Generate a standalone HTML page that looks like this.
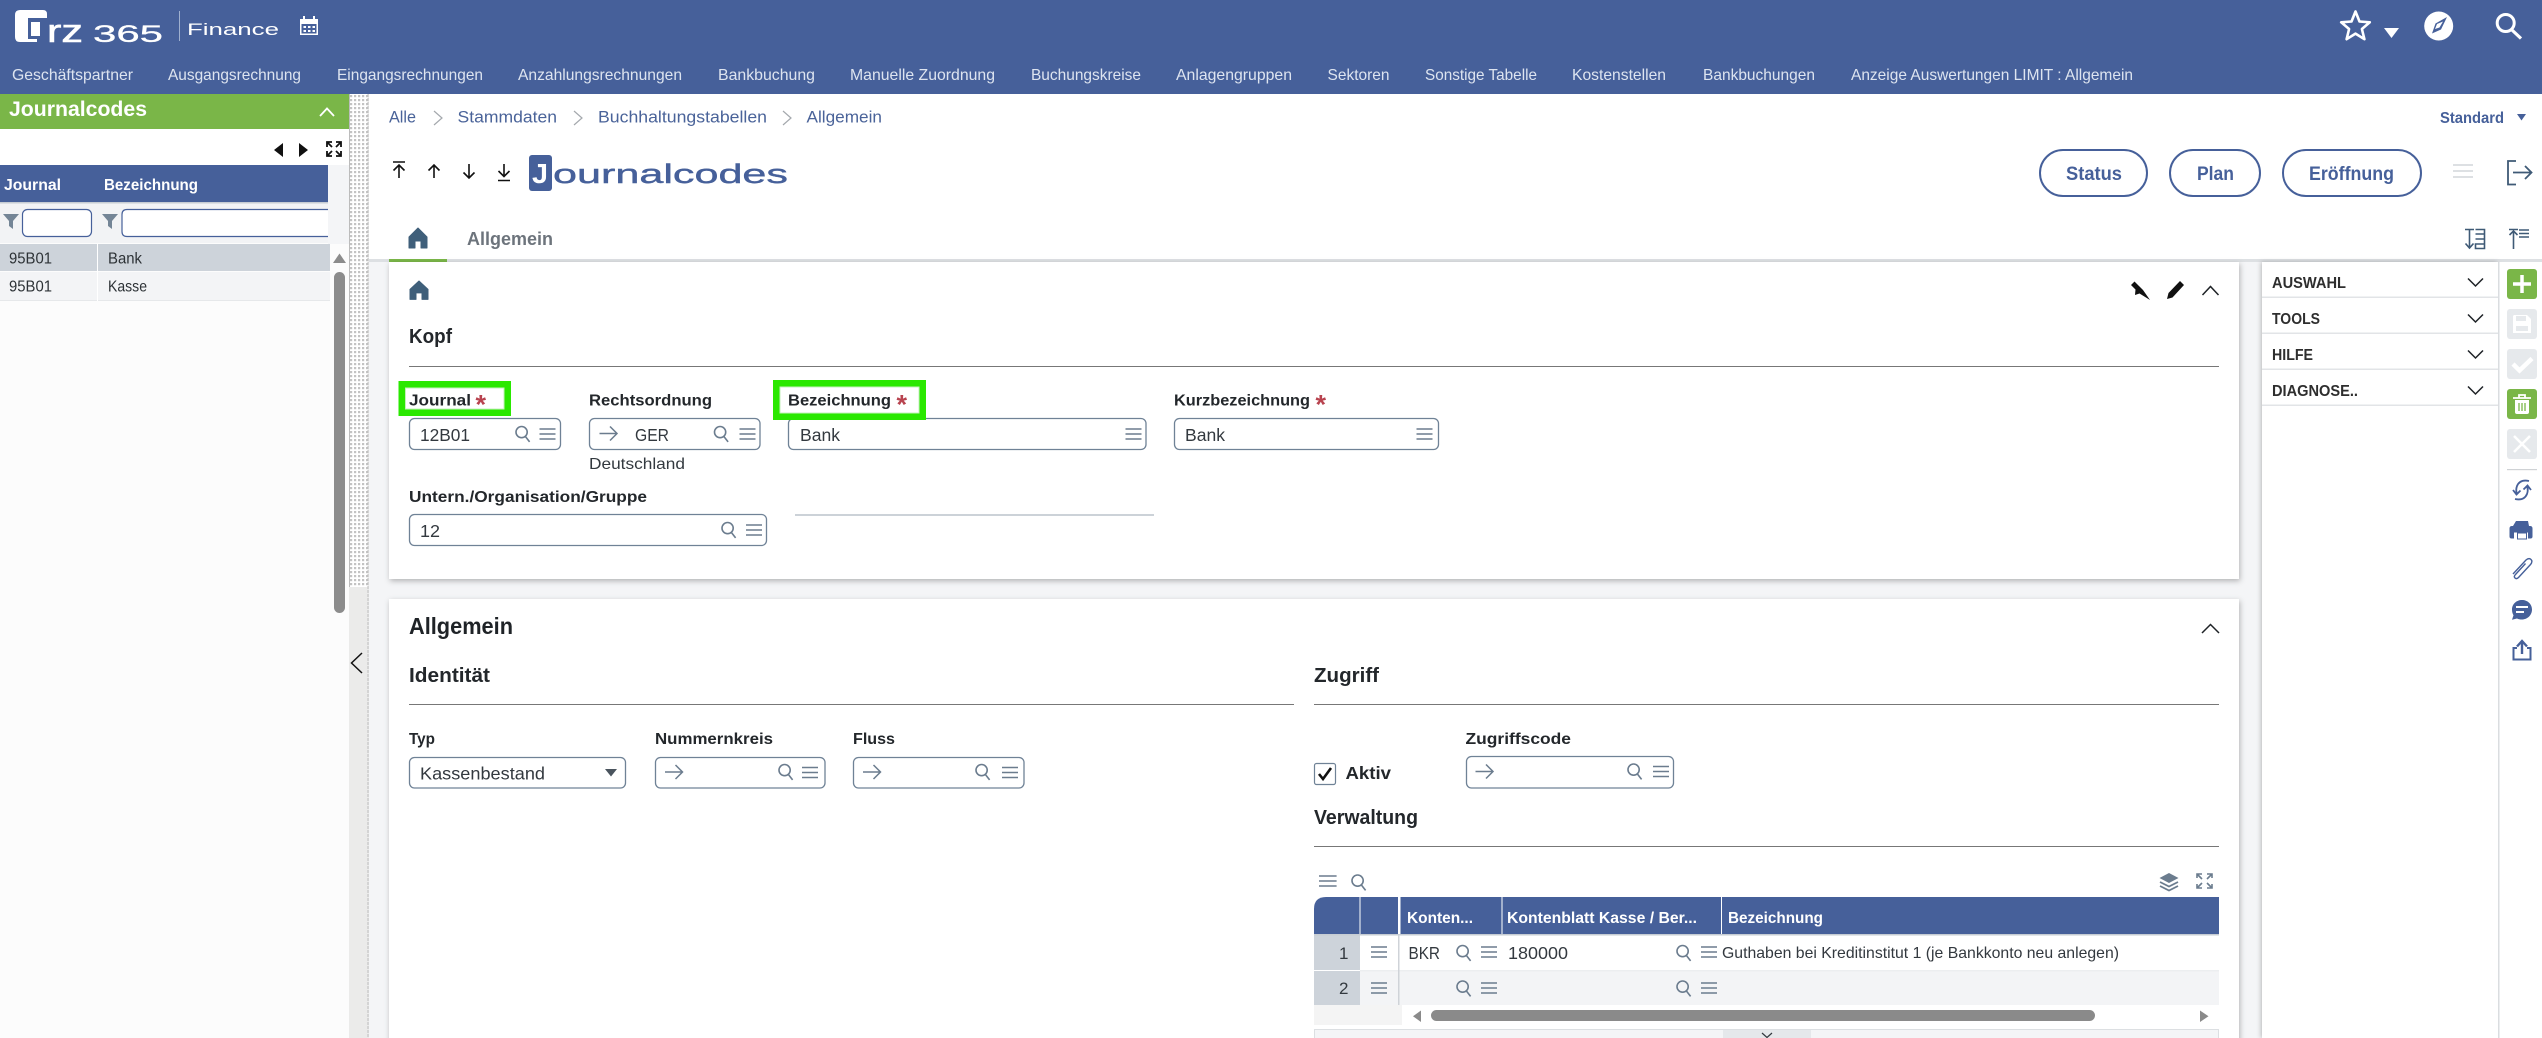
<!DOCTYPE html>
<html lang="de">
<head>
<meta charset="utf-8">
<title>Journalcodes</title>
<style>
html,body{margin:0;padding:0;background:#fff;width:2542px;height:1038px;overflow:hidden}
svg{display:block;font-family:"Liberation Sans",Arial,sans-serif}
text{white-space:pre}
.b{font-weight:700}
.nav{font-size:16px;fill:#dde4f0}
.crumb{font-size:16.500px;fill:#4a6399}
.lbl{font-size:16px;font-weight:700;fill:#23272b}
.val{font-size:17.500px;fill:#33393f}
.cell{font-size:16px;fill:#2d3236}
.sec{font-size:20px;font-weight:700;fill:#23272b}
.acc{font-size:15.500px;font-weight:700;fill:#2e2e2e}
.btn{font-size:19px;font-weight:700;fill:#46609a}
.th{font-size:16px;font-weight:700;fill:#fff}
.ln{stroke:#777;stroke-width:1}
.inp{fill:#fff;stroke:#6f8296;stroke-width:1.3}
.ico{fill:none;stroke:#6b7c8e;stroke-width:1.6}
</style>
</head>
<body>
<svg width="2542" height="1038" viewBox="0 0 2542 1038" xmlns="http://www.w3.org/2000/svg">
<defs>
<pattern id="dots" x="349" y="94" width="4" height="4" patternUnits="userSpaceOnUse"><rect width="4" height="4" fill="#fff"/><rect x="1" y="1" width="2.2" height="2.2" fill="#c3c3c3"/></pattern>
<filter id="sh" x="-2%" y="-5%" width="104%" height="110%"><feDropShadow dx="1" dy="2" stdDeviation="3" flood-color="#000" flood-opacity=".28"/></filter>
<filter id="sh2" x="-5%" y="-2%" width="110%" height="104%"><feDropShadow dx="-1" dy="0" stdDeviation="2.5" flood-color="#000" flood-opacity=".25"/></filter>
<g id="s"><circle cx="6.6" cy="6.6" r="5.6" class="ico"/><path d="M10.4 11l4.2 5.4" class="ico" stroke-width="2"/></g>
<g id="h"><path d="M0 1h16M0 6h16M0 11h16" class="ico" stroke-width="1.8"/></g>
<g id="a"><path d="M0 7.5h17M10.5 0.5l7 7-7 7" fill="none" stroke="#6b7c8e" stroke-width="1.5"/></g>
<path id="home" d="M9 0L18 9V20H12V13H6V20H0V9Z" fill="#3f5f7a" stroke="#3f5f7a" stroke-linejoin="round"/>
<path id="chd" d="M0 0L7.5 7.5L15 0" fill="none" stroke="#1e2226" stroke-width="1.5"/>
</defs>

<!-- Header -->
<rect width="2542" height="94" fill="#46609a"/>
<path d="M20 10H43Q47 10 47 14V18H28V39H37V42H20Q15 42 15 37V15Q15 10 20 10ZM31 22H40V36H31Z" fill="#fff"/>
<text x="47" y="42" font-size="32" fill="#fff" textLength="36" lengthAdjust="spacingAndGlyphs" stroke="#fff" stroke-width=".6">rz</text>
<text x="93" y="42" font-size="24" fill="#fff" textLength="70" lengthAdjust="spacingAndGlyphs" stroke="#fff" stroke-width=".3">365</text>
<rect x="179" y="11" width="1" height="30" fill="#9fb0cf"/>
<text x="187" y="35" font-size="17" fill="#fff" textLength="92" lengthAdjust="spacingAndGlyphs">Finance</text>
<g fill="#fff"><path d="M300 19h18v16h-18zM301.500 24v9.500h15v-9.500z" fill-rule="evenodd"/><rect x="303" y="16" width="2" height="4"/><rect x="313" y="16" width="2" height="4"/><rect x="303.500" y="26" width="2.500" height="2"/><rect x="308" y="26" width="2.500" height="2"/><rect x="312.500" y="26" width="2.500" height="2"/><rect x="303.500" y="30" width="2.500" height="2"/><rect x="308" y="30" width="2.500" height="2"/><rect x="312.500" y="30" width="2.500" height="2"/></g>
<path d="M2355.500 11.500l4 10 10.300.8-7.900 6.700 2.500 10.200-8.900-5.600-8.900 5.600 2.500-10.200-7.900-6.700 10.300-.8z" fill="none" stroke="#fff" stroke-width="2.600" stroke-linejoin="round"/>
<path d="M2384 28h15l-7.500 10z" fill="#fff"/>
<circle cx="2438.700" cy="26" r="14.500" fill="#fff"/>
<path d="M2447 17l-6 12.500-9 4 3.500-10z" fill="#46609a"/><path d="M2443 21.500l-3.500 6-4.500 1.500 2-5z" fill="#fff"/>
<circle cx="2505.700" cy="23" r="8.500" fill="none" stroke="#fff" stroke-width="3"/><path d="M2512 30l9 8.500" stroke="#fff" stroke-width="3.200" fill="none"/>

<text class="nav" x="12" y="80" textLength="121" lengthAdjust="spacingAndGlyphs">Geschäftspartner</text>
<text class="nav" x="168" y="80" textLength="133" lengthAdjust="spacingAndGlyphs">Ausgangsrechnung</text>
<text class="nav" x="337" y="80" textLength="146" lengthAdjust="spacingAndGlyphs">Eingangsrechnungen</text>
<text class="nav" x="518" y="80" textLength="164" lengthAdjust="spacingAndGlyphs">Anzahlungsrechnungen</text>
<text class="nav" x="718" y="80" textLength="97" lengthAdjust="spacingAndGlyphs">Bankbuchung</text>
<text class="nav" x="850" y="80" textLength="145" lengthAdjust="spacingAndGlyphs">Manuelle Zuordnung</text>
<text class="nav" x="1031" y="80" textLength="110" lengthAdjust="spacingAndGlyphs">Buchungskreise</text>
<text class="nav" x="1176" y="80" textLength="116" lengthAdjust="spacingAndGlyphs">Anlagengruppen</text>
<text class="nav" x="1327.500" y="80" textLength="62" lengthAdjust="spacingAndGlyphs">Sektoren</text>
<text class="nav" x="1425" y="80" textLength="112" lengthAdjust="spacingAndGlyphs">Sonstige Tabelle</text>
<text class="nav" x="1572" y="80" textLength="94" lengthAdjust="spacingAndGlyphs">Kostenstellen</text>
<text class="nav" x="1703" y="80" textLength="112" lengthAdjust="spacingAndGlyphs">Bankbuchungen</text>
<text class="nav" x="1851" y="80" textLength="282" lengthAdjust="spacingAndGlyphs">Anzeige Auswertungen LIMIT : Allgemein</text>

<!-- Left panel -->
<rect x="0" y="94" width="349" height="944" fill="#fcfcfc"/>
<rect x="0" y="94" width="349" height="35" fill="#7ab648"/>
<rect x="0" y="129" width="349" height="36" fill="#fff"/>
<text x="9" y="116" font-size="21" class="b" fill="#fff" textLength="138" lengthAdjust="spacingAndGlyphs">Journalcodes</text>
<path d="M320 116l7-7.500 7 7.500" fill="none" stroke="#fff" stroke-width="1.800"/>
<path d="M283 143v14l-9-7zM299 143v14l9-7z" fill="#111"/>
<path d="M327 147v-5h5M327 142l5 5M341 147v-5h-5M341 142l-5 5M327 151v5h5M327 156l5-5M341 151v5h-5M341 156l-5-5" fill="none" stroke="#111" stroke-width="1.800"/>
<rect x="328" y="165" width="21" height="79" fill="#f4f5f7"/>
<rect x="0" y="165" width="328" height="37" fill="#46609a"/>
<text class="th" x="4" y="190" textLength="57" lengthAdjust="spacingAndGlyphs">Journal</text>
<text class="th" x="104" y="190" textLength="94" lengthAdjust="spacingAndGlyphs">Bezeichnung</text>
<rect x="0" y="202" width="328" height="41" fill="#f2f3f5"/>
<rect x="0" y="202" width="328" height="1.500" fill="#c6ccd3"/>
<path d="M3 214h16l-6 7v8l-4-3v-5z" fill="#748596"/><path d="M102 214h16l-6 7v8l-4-3v-5z" fill="#748596"/>
<rect x="22.500" y="209.500" width="69" height="27" rx="5" fill="#fff" stroke="#46609a" stroke-width="1.200"/>
<path d="M328 209.500H127q-5 0-5 5v17q0 5 5 5H328" fill="#fff" stroke="#46609a" stroke-width="1.200"/>
<rect x="0" y="244" width="330" height="27" fill="#cdd3da"/>
<rect x="0" y="272" width="330" height="28" fill="#f3f4f6"/>
<rect x="0" y="300" width="330" height="1" fill="#e6e8ea"/>
<rect x="97" y="244" width="1" height="57" fill="#fff"/>
<text class="cell" x="9" y="263.500" textLength="43" lengthAdjust="spacingAndGlyphs">95B01</text>
<text class="cell" x="108" y="263.500" textLength="34" lengthAdjust="spacingAndGlyphs">Bank</text>
<text class="cell" x="9" y="291.500" textLength="43" lengthAdjust="spacingAndGlyphs">95B01</text>
<text class="cell" x="108" y="291.500" textLength="39" lengthAdjust="spacingAndGlyphs">Kasse</text>
<path d="M333 263l6.500-9.500 6.500 9.500z" fill="#8c8c8c"/>
<rect x="334" y="272" width="11" height="341" rx="5.500" fill="#8c8c8c"/>

<!-- Splitter -->
<rect x="349" y="94" width="20" height="944" fill="#ebebea"/>
<rect x="349" y="94" width="19" height="493" fill="url(#dots)"/>
<rect x="349" y="94" width="1" height="493" fill="#bcbcbc"/>
<path d="M368 94V1038" stroke="#bdbdbd" stroke-width="1" stroke-dasharray="3 1"/>
<path d="M362 653l-10.500 10 10.500 10" fill="none" stroke="#111" stroke-width="1.500"/>

<!-- Main top -->
<rect x="369" y="94" width="2173" height="168" fill="#fff"/>
<rect x="369" y="262" width="1893" height="776" fill="#f4f5f7"/>
<text class="crumb" x="389" y="122.500" textLength="27" lengthAdjust="spacingAndGlyphs">Alle</text>
<path d="M434 111l8 7-8 7M574 111l8 7-8 7M783 111l8 7-8 7" fill="none" stroke="#a4a8ad" stroke-width="1.200"/>
<text class="crumb" x="457.500" y="122.500" textLength="99.500" lengthAdjust="spacingAndGlyphs">Stammdaten</text>
<text class="crumb" x="598" y="122.500" textLength="169" lengthAdjust="spacingAndGlyphs">Buchhaltungstabellen</text>
<text class="crumb" x="806.500" y="122.500" textLength="75.500" lengthAdjust="spacingAndGlyphs">Allgemein</text>
<text x="2440" y="123" font-size="15.500" class="b" fill="#46609a" textLength="64" lengthAdjust="spacingAndGlyphs">Standard</text>
<path d="M2517 114h9l-4.500 6.500z" fill="#46609a"/>

<g fill="none" stroke="#111" stroke-width="1.600">
<path d="M393 162h12M399 178v-13M393.500 170.500l5.500-5.500 5.500 5.500"/>
<path d="M434 178v-13M428.500 170.500l5.500-5.500 5.500 5.500"/>
<path d="M469 164v13.500M463.500 172.500l5.500 5.500 5.500-5.500"/>
<path d="M504 164v12.500M498.500 171l5.500 5.500 5.500-5.500M498 180.500h12"/>
</g>
<rect x="529" y="155" width="23" height="36" rx="3" fill="#46609a"/>
<text x="532" y="183" font-size="28" class="b" fill="#fff" textLength="16" lengthAdjust="spacingAndGlyphs">J</text>
<text x="553" y="183" font-size="27" fill="#46609a" stroke="#46609a" stroke-width=".4" textLength="235" lengthAdjust="spacingAndGlyphs">ournalcodes</text>

<g fill="#fff" stroke="#46609a" stroke-width="2"><rect x="2040" y="150" width="107" height="46" rx="23"/><rect x="2170" y="150" width="90" height="46" rx="23"/><rect x="2283" y="150" width="138" height="46" rx="23"/></g>
<text class="btn" x="2066" y="180" textLength="56" lengthAdjust="spacingAndGlyphs">Status</text>
<text class="btn" x="2197" y="180" textLength="37" lengthAdjust="spacingAndGlyphs">Plan</text>
<text class="btn" x="2309" y="180" textLength="85" lengthAdjust="spacingAndGlyphs">Eröffnung</text>
<path d="M2453 165h20M2453 171h20M2453 177h20" stroke="#dde0e3" stroke-width="2"/>
<path d="M2516 161h-8v23.500h8M2513 172.500h18M2525 166l6.500 6.500-6.500 6.500" fill="none" stroke="#3f5a76" stroke-width="1.800"/>

<use href="#home" x="409" y="228"/>
<text x="467" y="245" font-size="18" class="b" fill="#6d747c" textLength="86" lengthAdjust="spacingAndGlyphs">Allgemein</text>
<rect x="369" y="259" width="2173" height="3" fill="#dde0e3"/>
<rect x="389" y="259" width="58" height="3" fill="#7ab648"/>
<g fill="none" stroke="#3f5a76" stroke-width="1.600">
<path d="M2465 229.500h9M2469.500 229.500v19M2465.500 243.500l4 4.500 4-4.500"/>
<path d="M2475.500 229.500h9v4.500h-9M2475.500 234h9v5h-9M2475.500 239h9v5h-9M2475.500 244h9v4.500h-9z" />
<path d="M2509 229.500h9M2513.500 231v18M2509.500 235l4-4 4 4M2519 230h10M2519 233.500h10M2519 237h10" />
</g>

<!-- Card 1 -->
<rect x="389" y="262" width="1850" height="317" fill="#fff" filter="url(#sh)"/>
<use href="#home" transform="translate(410 281) scale(1 .92)"/>
<path d="M2134.500 281.500L2139 286 2143 290 2150 300 2139.500 293.500 2135 295 2135.500 289.500 2131 285Z" fill="#111"/>
<path d="M2180 281l4 4-11.500 12.500-5.500 1.500 1.500-6z" fill="#111"/>
<path d="M2202.500 295l8-8.500 8 8.500" fill="none" stroke="#1e2226" stroke-width="1.500"/>
<text class="sec" x="409" y="343" textLength="43" lengthAdjust="spacingAndGlyphs">Kopf</text>
<path class="ln" d="M409 366.500H2219"/>

<rect class="inp" x="409.500" y="418.500" width="151" height="31" rx="5"/>
<rect class="inp" x="589.500" y="418.500" width="170.500" height="31" rx="5"/>
<rect class="inp" x="788.500" y="418.500" width="357.500" height="31" rx="5"/>
<rect class="inp" x="1174.500" y="418.500" width="264" height="31" rx="5"/>

<rect x="402" y="384.500" width="105.500" height="28" fill="#fff" stroke="#2ae800" stroke-width="7"/>
<rect x="405.500" y="388" width="98.500" height="21" fill="none" stroke="#c6efbc" stroke-width="1"/>
<rect x="776.500" y="383.500" width="146" height="33" fill="#fff" stroke="#2ae800" stroke-width="7"/>
<rect x="780" y="387" width="139" height="26" fill="none" stroke="#c6efbc" stroke-width="1"/>

<text class="lbl" x="409" y="405.500" textLength="62" lengthAdjust="spacingAndGlyphs">Journal</text>
<text x="475.500" y="413.500" font-size="27" class="b" fill="#b8434f">*</text>
<text class="lbl" x="589" y="405.500" textLength="123" lengthAdjust="spacingAndGlyphs">Rechtsordnung</text>
<text class="lbl" x="788" y="405.500" textLength="103" lengthAdjust="spacingAndGlyphs">Bezeichnung</text>
<text x="896.500" y="413.500" font-size="27" class="b" fill="#b8434f">*</text>
<text class="lbl" x="1174" y="405.500" textLength="136" lengthAdjust="spacingAndGlyphs">Kurzbezeichnung</text>
<text x="1315.500" y="413.500" font-size="27" class="b" fill="#b8434f">*</text>

<text class="val" x="420" y="441" textLength="50" lengthAdjust="spacingAndGlyphs">12B01</text>
<use href="#s" x="515" y="425.500"/><use href="#h" x="539.500" y="428"/>
<use href="#a" x="599.500" y="426"/>
<text class="val" x="635" y="441" textLength="34" lengthAdjust="spacingAndGlyphs">GER</text>
<use href="#s" x="713.500" y="425.500"/><use href="#h" x="739.500" y="428"/>
<text class="val" x="800" y="441" textLength="40" lengthAdjust="spacingAndGlyphs">Bank</text>
<use href="#h" x="1125.500" y="428"/>
<text class="val" x="1185" y="441" textLength="40" lengthAdjust="spacingAndGlyphs">Bank</text>
<use href="#h" x="1416.500" y="428"/>
<text x="589" y="469" font-size="16" fill="#33393f" textLength="96" lengthAdjust="spacingAndGlyphs">Deutschland</text>

<text class="lbl" x="409" y="502" textLength="238" lengthAdjust="spacingAndGlyphs">Untern./Organisation/Gruppe</text>
<rect class="inp" x="409.500" y="514.500" width="357" height="31" rx="5"/>
<text class="val" x="420" y="537" textLength="20" lengthAdjust="spacingAndGlyphs">12</text>
<use href="#s" x="721" y="521.500"/><use href="#h" x="746" y="524"/>
<rect x="795" y="514" width="359" height="2" fill="#ccd2d8"/>

<!-- Card 2 -->
<rect x="389" y="599" width="1850" height="450" fill="#fff" filter="url(#sh)"/>
<text x="409" y="634" font-size="23.500" class="b" fill="#1f2327" textLength="104" lengthAdjust="spacingAndGlyphs">Allgemein</text>
<path d="M2202 633l8.500-8.500 8.500 8.500" fill="none" stroke="#1e2226" stroke-width="1.500"/>
<text class="sec" x="409" y="682" textLength="81" lengthAdjust="spacingAndGlyphs">Identität</text>
<text class="sec" x="1314" y="682" textLength="65" lengthAdjust="spacingAndGlyphs">Zugriff</text>
<path class="ln" d="M409 704.500H1294M1314 704.500H2219"/>

<text class="lbl" x="409" y="744" textLength="26" lengthAdjust="spacingAndGlyphs">Typ</text>
<text class="lbl" x="655" y="744" textLength="118" lengthAdjust="spacingAndGlyphs">Nummernkreis</text>
<text class="lbl" x="853" y="744" textLength="42" lengthAdjust="spacingAndGlyphs">Fluss</text>
<text class="lbl" x="1465.500" y="744" textLength="105.500" lengthAdjust="spacingAndGlyphs">Zugriffscode</text>

<rect class="inp" x="409.500" y="757.500" width="216" height="30.500" rx="5"/>
<text class="val" x="420" y="779.500" textLength="125" lengthAdjust="spacingAndGlyphs">Kassenbestand</text>
<path d="M605 769h12l-6 7.500z" fill="#4a545e"/>
<rect class="inp" x="655.500" y="757.500" width="169.500" height="30.500" rx="5"/>
<use href="#a" x="665" y="764.500"/><use href="#s" x="778" y="763.500"/><use href="#h" x="802" y="766.500"/>
<rect class="inp" x="853.500" y="757.500" width="170.500" height="30.500" rx="5"/>
<use href="#a" x="863" y="764.500"/><use href="#s" x="975" y="763.500"/><use href="#h" x="1002" y="766.500"/>

<rect x="1314.500" y="763.500" width="21" height="21" rx="2" fill="#fff" stroke="#6f8296" stroke-width="1.200"/>
<path d="M1319 774l4 5 8-11" fill="none" stroke="#111" stroke-width="2.600"/>
<text x="1345.500" y="779" font-size="17.500" class="b" fill="#23272b" textLength="45.500" lengthAdjust="spacingAndGlyphs">Aktiv</text>
<rect class="inp" x="1466.500" y="756.500" width="207" height="31.500" rx="5"/>
<use href="#a" x="1475.500" y="764"/><use href="#s" x="1627" y="763"/><use href="#h" x="1653" y="765.500"/>

<text class="sec" x="1314" y="824" textLength="104" lengthAdjust="spacingAndGlyphs">Verwaltung</text>
<path class="ln" d="M1314 846.500H2219"/>

<use href="#h" transform="translate(1319 875) scale(1.100 1)"/>
<use href="#s" x="1351" y="874"/>
<path d="M2169 873l9.500 5-9.500 5-9.500-5z" fill="#6b7c8e"/>
<path d="M2160 882l9 4.500 9-4.500M2160 886l9 4.500 9-4.500" fill="none" stroke="#6b7c8e" stroke-width="1.800"/>
<path d="M2197 878v-4h5M2197 874l5 5M2212 878v-4h-5M2212 874l-5 5M2197 884v4h5M2197 888l5-5M2212 884v4h-5M2212 888l-5-5" fill="none" stroke="#6b7c8e" stroke-width="1.600"/>

<path d="M1326 897H2219V934H1314V909Q1314 897 1326 897Z" fill="#46609a"/>
<rect x="1314" y="934" width="905" height="1.500" fill="#c6ccd3"/>
<g fill="#fff"><rect x="1359.500" y="897" width="1" height="37"/><rect x="1398" y="897" width="2.500" height="37"/><rect x="1501.500" y="897" width="1" height="37"/><rect x="1721" y="897" width="1" height="37"/></g>
<text class="th" x="1407" y="923" textLength="66" lengthAdjust="spacingAndGlyphs">Konten...</text>
<text class="th" x="1507" y="923" textLength="190" lengthAdjust="spacingAndGlyphs">Kontenblatt Kasse / Ber...</text>
<text class="th" x="1728" y="923" textLength="95" lengthAdjust="spacingAndGlyphs">Bezeichnung</text>

<rect x="1314" y="935.500" width="46" height="34.500" fill="#cdd3da"/>
<rect x="1314" y="971" width="46" height="34" fill="#cdd3da"/>
<rect x="1360" y="971" width="859" height="34" fill="#f3f4f6"/>
<rect x="1360" y="970" width="859" height="1.500" fill="#eceef0"/>
<rect x="1398" y="935" width="1.500" height="70" fill="#cfd3d8"/>
<text x="1339" y="959" font-size="17" fill="#33393f">1</text>
<text x="1339" y="994" font-size="17" fill="#33393f">2</text>
<use href="#h" x="1371" y="946"/><use href="#h" x="1371" y="982"/>
<text class="val" x="1408.500" y="959" textLength="31.500" lengthAdjust="spacingAndGlyphs">BKR</text>
<use href="#s" x="1456" y="944.500"/><use href="#h" x="1481" y="946"/>
<text class="val" x="1508" y="959" textLength="60" lengthAdjust="spacingAndGlyphs">180000</text>
<use href="#s" x="1676" y="944.500"/><use href="#h" x="1701" y="946"/>
<text x="1722" y="958" font-size="16" fill="#33393f" textLength="397" lengthAdjust="spacingAndGlyphs">Guthaben bei Kreditinstitut 1 (je Bankkonto neu anlegen)</text>
<use href="#s" x="1456" y="980"/><use href="#h" x="1481" y="982"/>
<use href="#s" x="1676" y="980"/><use href="#h" x="1701" y="982"/>

<rect x="1314" y="1005" width="88" height="20" fill="#f4f4f4"/>
<path d="M1421 1010.500v11.500l-8-5.750z" fill="#8a8a8a"/>
<rect x="1431" y="1010" width="664" height="11" rx="5.500" fill="#8a8a8a"/>
<path d="M2200 1010.500v11.500l8.500-5.750z" fill="#8a8a8a"/>
<rect x="1314.500" y="1029.500" width="904" height="10" fill="#f4f5f7" stroke="#dcdfe2"/>
<rect x="1723" y="1030" width="88" height="8" fill="#e5e8eb"/>
<path d="M1762 1033l5 4.500 5-4.500" fill="none" stroke="#33393f" stroke-width="1.200"/>

<!-- Accordion panel -->
<rect x="2262" y="262" width="236" height="776" fill="#fff" filter="url(#sh2)"/>
<rect x="2262" y="262" width="280" height="776" fill="#fff"/>
<rect x="2498" y="262" width="1.500" height="776" fill="#dadde0"/>
<g fill="#e2e4e7"><rect x="2262" y="296.500" width="236" height="1.500"/><rect x="2262" y="332.500" width="236" height="1.500"/><rect x="2262" y="368.500" width="236" height="1.500"/><rect x="2262" y="404.500" width="236" height="1.500"/></g>
<text class="acc" x="2272" y="288" textLength="74" lengthAdjust="spacingAndGlyphs">AUSWAHL</text>
<text class="acc" x="2272" y="324" textLength="48" lengthAdjust="spacingAndGlyphs">TOOLS</text>
<text class="acc" x="2272" y="360" textLength="41" lengthAdjust="spacingAndGlyphs">HILFE</text>
<text class="acc" x="2272" y="396" textLength="86" lengthAdjust="spacingAndGlyphs">DIAGNOSE..</text>
<use href="#chd" x="2468" y="278.500"/><use href="#chd" x="2468" y="314.500"/><use href="#chd" x="2468" y="350.500"/><use href="#chd" x="2468" y="386.500"/>

<!-- Right toolbar -->
<rect x="2507" y="269" width="30" height="30" rx="3" fill="#7ab648"/>
<path d="M2522 275v18M2513 284h18" stroke="#fff" stroke-width="3.500"/>
<rect x="2507" y="309" width="30" height="30" rx="3" fill="#e6e9ec"/>
<path d="M2514 315h13l4 4v14h-18v-17z" fill="#fff"/><rect x="2516" y="316" width="10" height="5" fill="#e6e9ec"/><rect x="2516" y="326" width="12" height="5" fill="#e6e9ec"/>
<rect x="2507" y="349" width="30" height="30" rx="3" fill="#e6e9ec"/>
<path d="M2513 364l6.500 6.500 12.500-12" fill="none" stroke="#fff" stroke-width="4.500"/>
<rect x="2507" y="389" width="30" height="30" rx="3" fill="#7ab648"/>
<path d="M2513 398h18M2519 398v-3h6v3" fill="none" stroke="#fff" stroke-width="1.800"/>
<path d="M2515 400h14v12q0 2-2 2h-10q-2 0-2-2z" fill="#fff"/>
<path d="M2519 403v8M2522 403v8M2525 403v8" stroke="#7ab648" stroke-width="1.300"/>
<rect x="2507" y="429" width="30" height="30" rx="3" fill="#e6e9ec"/>
<path d="M2514 436l16 16M2530 436l-16 16" stroke="#fff" stroke-width="2.600"/>
<rect x="2507" y="469" width="30" height="1.200" fill="#cfd2d5"/>
<g fill="none" stroke="#46609a" stroke-width="1.800">
<path d="M2529 481q-9-2-12 5-1.500 4 0 8M2513 490l3.500 4.500 4-4"/>
<path d="M2515 499q9 2 12-5 1.500-4 0-8M2531 490l-3.500-4.500-4 4"/>
</g>
<path d="M2516 521h12l1 5h1q2.500 0 2.500 2.500v8q0 2-2 2h-2.500v-6h-14v6h-2.500q-2 0-2-2v-8q0-2.500 2.500-2.500h1z" fill="#46609a"/>
<rect x="2517.500" y="533" width="9" height="6" fill="#fff" stroke="#46609a"/>
<path d="M2513 574l13-14q3-2.500 5-.5t-.5 5l-12 13q-2 2-3.500.5t.5-3.500l10-11" fill="none" stroke="#46609a" stroke-width="1.400"/>
<path d="M2522 600c5.500 0 10 4 10 9.500s-4.500 10-10 10c-2 0-3.500-.3-5-1l-5 1.300 1.500-4.500c-1-1.700-1.500-3.500-1.500-5.800 0-5.500 4.500-9.500 10-9.500z" fill="#46609a"/>
<path d="M2516 607h12M2516 612h8" stroke="#fff" stroke-width="2"/>
<path d="M2517 648h-3.500v11.500h17V648h-3.500" fill="none" stroke="#46609a" stroke-width="2"/>
<path d="M2522 654v-12M2517 646.500l5-5.500 5 5.500" fill="none" stroke="#46609a" stroke-width="2.400"/>
</svg>
</body>
</html>
